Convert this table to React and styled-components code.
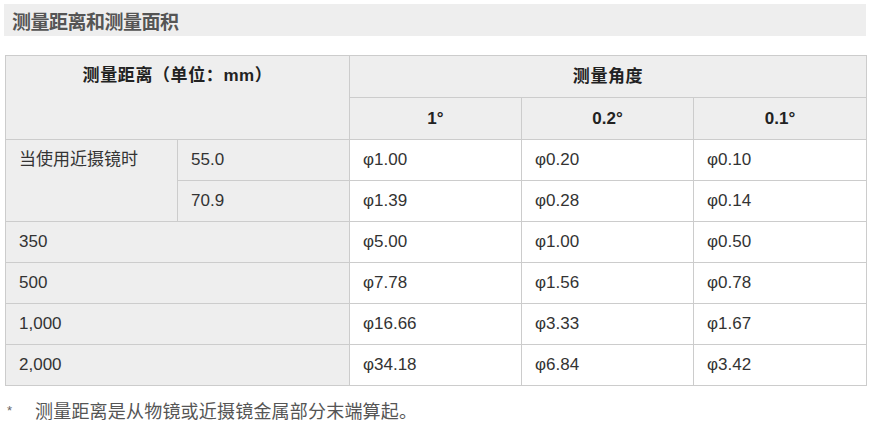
import React from 'react';
import styled, { createGlobalStyle } from 'styled-components';

const GlobalStyle = createGlobalStyle`
  body {
    margin: 0;
    background: #fff;
    font-family: "Liberation Sans", Arial, "Noto Sans CJK SC", sans-serif;
    color: #333;
  }
`;

const Page = styled.div`
  width: 862px;
  padding: 4px 0 0 4px;
`;

const TitleBar = styled.div`
  background: #eeeeee;
  height: 32px;
  display: flex;
  align-items: center;
  padding-left: 8px;
  font-size: 19px;
  font-weight: bold;
  color: #555;
  font-family: "Noto Sans CJK SC", sans-serif;
  letter-spacing: -0.5px;
`;

const Table = styled.table`
  margin: 19px 0 0 1px;
  width: 861px;
  border-collapse: collapse;
  table-layout: fixed;
  font-size: 17px;
`;

const Cell = styled.td`
  border: 1px solid #cccccc;
  height: 41px;
  padding: 0 13px;
  box-sizing: border-box;
  line-height: 20px;
  vertical-align: ${({ $top }) => ($top ? 'top' : 'middle')};
  padding-top: ${({ $top }) => ($top ? '10px' : '0')};
  background: ${({ $shade }) => ($shade ? '#eeeeee' : '#ffffff')};
  color: #333;
  text-align: left;
`;

const Head = styled.th`
  border: 1px solid #cccccc;
  height: 41px;
  padding: 0 13px;
  line-height: 20px;
  background: #eeeeee;
  font-weight: bold;
  color: #222;
  text-align: center;
  letter-spacing: ${({ $wide }) => ($wide ? '0.6px' : '0')};
  vertical-align: ${({ $top }) => ($top ? 'top' : 'middle')};
  padding-top: ${({ $top }) => ($top ? '10px' : '0')};
`;

const Note = styled.div`
  display: flex;
  align-items: center;
  margin-top: 11px;
  font-size: 18px;
  letter-spacing: 0.2px;
  color: #555;
  font-family: "Noto Sans CJK SC", sans-serif;
`;

const Star = styled.span`
  width: 28px;
  padding-left: 3px;
  color: #666;
  font-size: 13px;
  font-family: "Liberation Sans", sans-serif;
`;

const closeUp = [
  ['55.0', 'φ1.00', 'φ0.20', 'φ0.10'],
  ['70.9', 'φ1.39', 'φ0.28', 'φ0.14'],
];

const rows = [
  ['350', 'φ5.00', 'φ1.00', 'φ0.50'],
  ['500', 'φ7.78', 'φ1.56', 'φ0.78'],
  ['1,000', 'φ16.66', 'φ3.33', 'φ1.67'],
  ['2,000', 'φ34.18', 'φ6.84', 'φ3.42'],
];

export default function App() {
  return (
    <Page>
      <GlobalStyle />
      <TitleBar>测量距离和测量面积</TitleBar>
      <Table>
        <colgroup>
          <col style={{ width: 172 }} />
          <col style={{ width: 172 }} />
          <col style={{ width: 172 }} />
          <col style={{ width: 172 }} />
          <col style={{ width: 173 }} />
        </colgroup>
        <thead>
          <tr>
            <Head colSpan={2} rowSpan={2} $top $wide>测量距离（单位：mm）</Head>
            <Head colSpan={3} $wide>测量角度</Head>
          </tr>
          <tr>
            <Head>1°</Head>
            <Head>0.2°</Head>
            <Head>0.1°</Head>
          </tr>
        </thead>
        <tbody>
          {closeUp.map((r, i) => (
            <tr key={r[0]}>
              {i === 0 && (
                <Cell rowSpan={2} $shade $top>当使用近摄镜时</Cell>
              )}
              <Cell $shade>{r[0]}</Cell>
              <Cell>{r[1]}</Cell>
              <Cell>{r[2]}</Cell>
              <Cell>{r[3]}</Cell>
            </tr>
          ))}
          {rows.map((r) => (
            <tr key={r[0]}>
              <Cell colSpan={2} $shade>{r[0]}</Cell>
              <Cell>{r[1]}</Cell>
              <Cell>{r[2]}</Cell>
              <Cell>{r[3]}</Cell>
            </tr>
          ))}
        </tbody>
      </Table>
      <Note>
        <Star>*</Star>
        测量距离是从物镜或近摄镜金属部分末端算起。
      </Note>
    </Page>
  );
}
